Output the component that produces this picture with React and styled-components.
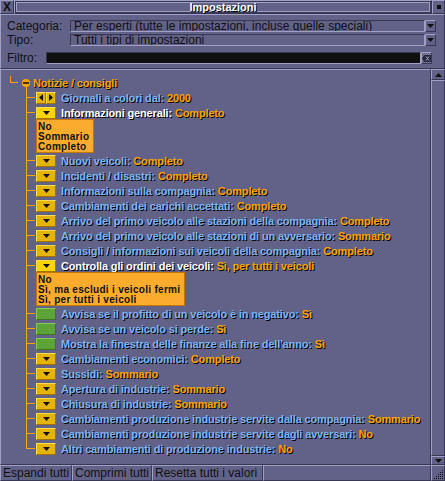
import React from "react";
import styled, { createGlobalStyle, css } from "styled-components";

const BG = "#626288";
const LIGHT = "#a0a0c4";
const DARK = "#383854";
const ORANGE = "#fca400";
const BLUE = "#7cb4f4";
const INK = "#101010";

const GlobalStyle = createGlobalStyle`
  html, body { margin: 0; padding: 0; background: ${BG}; }
  body { font-family: "Liberation Sans", Arial, sans-serif; }
`;

const raised = css`
  border-style: solid;
  border-width: 1px;
  border-color: ${LIGHT} ${DARK} ${DARK} ${LIGHT};
`;
const sunken = css`
  border-style: solid;
  border-width: 1px;
  border-color: ${DARK} ${LIGHT} ${LIGHT} ${DARK};
`;

const Window = styled.div`
  width: 445px;
  height: 481px;
  display: flex;
  flex-direction: column;
  background: ${BG};
  box-sizing: border-box;
  overflow: hidden;
`;

/* ---------- title bar ---------- */
const TitleBar = styled.div`
  display: flex;
  height: 14px;
  flex-shrink: 0;
`;
const CloseBtn = styled.div`
  ${raised};
  width: 12px;
  display: flex;
  align-items: center;
  justify-content: center;
  font: bold 12px "Liberation Sans", sans-serif;
  color: ${INK};
`;
const Caption = styled.div`
  ${raised};
  flex: 1;
  display: flex;
  align-items: center;
  justify-content: center;
  box-shadow: inset 0 0 0 1px ${DARK}, inset 0 0 0 2px ${LIGHT};
  color: #fff;
  font: bold 11px "Liberation Sans", sans-serif;
  text-shadow: 1px 1px 0 #000;
`;
const StickyBtn = styled.div`
  ${raised};
  width: 11px;
  display: flex;
  align-items: center;
  justify-content: center;
  &::after {
    content: "";
    width: 4px;
    height: 4px;
    background: ${INK};
  }
`;

/* ---------- header panel ---------- */
const Header = styled.div`
  ${raised};
  height: 48px;
  flex-shrink: 0;
  padding: 5px 8px 0 6px;
  box-sizing: content-box;
  display: flex;
  flex-direction: column;
  gap: 2px;
`;
const FieldRow = styled.div`
  display: flex;
  align-items: center;
  height: 12px;
  margin-top: ${(p) => p.$gapTop || 0}px;
  padding-right: ${(p) => p.$padRight || 0}px;
`;
const Label = styled.div`
  width: ${(p) => p.$w}px;
  flex-shrink: 0;
  font-size: 12px;
  color: ${INK};
  line-height: 12px;
`;
const DropField = styled.div`
  ${sunken};
  flex: 1;
  height: 10px;
  padding-left: 3px;
  font-size: 12px;
  line-height: 10px;
  color: ${INK};
  white-space: nowrap;
  overflow: hidden;
`;
const DropArrowBtn = styled.div`
  ${raised};
  width: 9px;
  height: 10px;
  display: flex;
  align-items: center;
  justify-content: center;
`;
const FilterField = styled.div`
  ${sunken};
  flex: 1;
  height: 10px;
  background: ${INK};
`;
const ClearBtn = styled.div`
  ${raised};
  width: 9px;
  height: 10px;
  display: flex;
  align-items: center;
  justify-content: center;
  background: repeating-conic-gradient(#8888a8 0 25%, #58587a 0 50%) 0 0 / 2px 2px;
`;

/* ---------- list ---------- */
const Body = styled.div`
  flex: 1;
  display: flex;
  min-height: 0;
`;
const List = styled.div`
  ${raised};
  flex: 1;
  padding-top: 5px;
  overflow: hidden;
`;
const Scroll = styled.div`
  width: 14px;
  display: flex;
  flex-direction: column;
`;
const ScrollBtn = styled.div`
  ${raised};
  height: ${(p) => p.$h}px;
  display: flex;
  align-items: center;
  justify-content: center;
`;
const ScrollTrack = styled.div`
  ${raised};
  flex: 1;
`;

const Row = styled.div`
  display: flex;
  align-items: center;
  height: 15px;
  white-space: nowrap;
`;
const Gutter = styled.div`
  width: 35px;
  height: 100%;
  flex-shrink: 0;
  background:
    linear-gradient(${ORANGE}, ${ORANGE}) 25px 7px / 9px 1px no-repeat,
    linear-gradient(${ORANGE}, ${ORANGE}) 25px 0 / 1px ${(p) => (p.$last ? "8px" : "100%")} no-repeat;
`;
const RootGutter = styled.div`
  width: 21px;
  height: 100%;
  flex-shrink: 0;
  background:
    linear-gradient(${ORANGE}, ${ORANGE}) 9px 7px / 8px 1px no-repeat,
    linear-gradient(${ORANGE}, ${ORANGE}) 9px 1px / 1px 7px no-repeat;
`;
const Fold = styled.div`
  width: 8px;
  height: 8px;
  border-radius: 50%;
  background: ${ORANGE};
  margin: 1px 3px 0 0;
  display: flex;
  align-items: center;
  justify-content: center;
  &::after {
    content: "";
    width: 6px;
    height: 2px;
    background: #4a2c00;
  }
`;
const RootRow = styled(Row)`
  background: linear-gradient(${ORANGE}, ${ORANGE}) 25px 12px / 1px 3px no-repeat;
`;
const Heading = styled.span`
  font: bold 11px "Liberation Sans", sans-serif;
  letter-spacing: -0.15px;
  color: ${ORANGE};
  text-shadow: 1px 1px 0 #000;
`;

const YellowBtn = styled.div`
  width: ${(p) => p.$w}px;
  height: 12px;
  box-sizing: border-box;
  border: 1px solid;
  border-color: #fcdc50 #a07000 #a07000 #fcdc50;
  background: ${(p) => (p.$active ? "#fcd400" : "#e4b400")};
  display: flex;
  align-items: center;
  justify-content: center;
`;
const Control = styled.div`
  display: flex;
  width: 20px;
  margin-right: 5px;
`;
const BoolBox = styled.div`
  width: 20px;
  height: 12px;
  margin-right: 5px;
  box-sizing: border-box;
  border: 1px solid;
  border-color: #88c860 #3c7424 #3c7424 #88c860;
  background: #5ca438;
`;
const Text = styled.span`
  font: bold 11px "Liberation Sans", sans-serif;
  letter-spacing: -0.15px;
  color: ${(p) => (p.$open ? "#ffffff" : BLUE)};
  text-shadow: 1px 1px 0 #000;
`;
const Value = styled.span`
  color: ${ORANGE};
`;

const PopRow = styled.div`
  display: flex;
  height: 34px;
  margin-top: -1px;
`;
const PopGutter = styled.div`
  width: 35px;
  flex-shrink: 0;
  background: linear-gradient(${ORANGE}, ${ORANGE}) 25px 0 / 1px 100% no-repeat;
`;
const Popup = styled.div`
  background: #fcac2c;
  border: 1px solid #c07800;
  padding: 2px 4px 0 1px;
  box-sizing: border-box;
  height: 34px;
`;
const PopItem = styled.div`
  font: bold 10px "Liberation Sans", sans-serif;
  letter-spacing: 0.3px;
  line-height: 10px;
  height: 10px;
  color: ${INK};
`;

/* ---------- bottom bar ---------- */
const Bottom = styled.div`
  display: flex;
  height: 16px;
  flex-shrink: 0;
`;
const BarBtn = styled.div`
  ${raised};
  width: ${(p) => (p.$w ? `${p.$w - 4}px` : "auto")};
  flex: ${(p) => (p.$w ? "none" : 1)};
  padding-left: 2px;
  box-sizing: content-box;
  font-size: 12px;
  line-height: 14px;
  color: ${INK};
  white-space: nowrap;
`;
const Resize = styled.div`
  ${raised};
  width: 12px;
  display: flex;
  align-items: flex-end;
  justify-content: flex-end;
`;

const Tri = ({ dir = "down", color = INK }) => {
  const pts = {
    down: "0,0 7,0 3.5,4",
    up: "0,4 7,4 3.5,0",
    left: "4,0 4,7 0,3.5",
    right: "0,0 0,7 4,3.5",
  }[dir];
  const vert = dir === "down" || dir === "up";
  return (
    <svg width={vert ? 7 : 4} height={vert ? 4 : 7} viewBox={vert ? "0 0 7 4" : "0 0 4 7"}>
      <polygon points={pts} fill={color} />
    </svg>
  );
};

const rows = [
  { type: "arrows", label: "Giornali a colori dal", value: "2000" },
  { type: "drop", label: "Informazioni generali", value: "Completo", open: ["No", "Sommario", "Completo"] },
  { type: "drop", label: "Nuovi veicoli", value: "Completo" },
  { type: "drop", label: "Incidenti / disastri", value: "Completo" },
  { type: "drop", label: "Informazioni sulla compagnia", value: "Completo" },
  { type: "drop", label: "Cambiamenti dei carichi accettati", value: "Completo" },
  { type: "drop", label: "Arrivo del primo veicolo alle stazioni della compagnia", value: "Completo" },
  { type: "drop", label: "Arrivo del primo veicolo alle stazioni di un avversario", value: "Sommario" },
  { type: "drop", label: "Consigli / informazioni sui veicoli della compagnia", value: "Completo" },
  {
    type: "drop",
    label: "Controlla gli ordini dei veicoli",
    value: "Sì, per tutti i veicoli",
    open: ["No", "Sì, ma escludi i veicoli fermi", "Sì, per tutti i veicoli"],
  },
  { type: "bool", label: "Avvisa se il profitto di un veicolo è in negativo", value: "Sì" },
  { type: "bool", label: "Avvisa se un veicolo si perde", value: "Sì" },
  { type: "bool", label: "Mostra la finestra delle finanze alla fine dell'anno", value: "Sì" },
  { type: "drop", label: "Cambiamenti economici", value: "Completo" },
  { type: "drop", label: "Sussidi", value: "Sommario" },
  { type: "drop", label: "Apertura di industrie", value: "Sommario" },
  { type: "drop", label: "Chiusura di industrie", value: "Sommario" },
  { type: "drop", label: "Cambiamenti produzione industrie servite dalla compagnia", value: "Sommario" },
  { type: "drop", label: "Cambiamenti produzione industrie servite dagli avversari", value: "No" },
  { type: "drop", label: "Altri cambiamenti di produzione industrie", value: "No" },
];

const SettingControl = ({ item }) => {
  if (item.type === "bool") return <BoolBox />;
  if (item.type === "arrows")
    return (
      <Control>
        <YellowBtn $w={10}>
          <Tri dir="left" />
        </YellowBtn>
        <YellowBtn $w={10}>
          <Tri dir="right" />
        </YellowBtn>
      </Control>
    );
  return (
    <Control>
      <YellowBtn $w={20} $active={!!item.open}>
        <Tri dir="down" />
      </YellowBtn>
    </Control>
  );
};

const App = () => {
  return (
    <>
      <GlobalStyle />
      <Window>
        <TitleBar>
          <CloseBtn>X</CloseBtn>
          <Caption>Impostazioni</Caption>
          <StickyBtn />
        </TitleBar>

        <Header>
          <FieldRow>
            <Label $w={63}>Categoria:</Label>
            <DropField>Per esperti (tutte le impostazioni, incluse quelle speciali)</DropField>
            <DropArrowBtn>
              <Tri dir="down" />
            </DropArrowBtn>
          </FieldRow>
          <FieldRow>
            <Label $w={63}>Tipo:</Label>
            <DropField>Tutti i tipi di impostazioni</DropField>
            <DropArrowBtn>
              <Tri dir="down" />
            </DropArrowBtn>
          </FieldRow>
          <FieldRow $gapTop={4} $padRight={4}>
            <Label $w={39}>Filtro:</Label>
            <FilterField />
            <ClearBtn>
              <svg width="9" height="7" viewBox="0 0 9 7">
                <polygon points="2,0 9,0 9,7 2,7 0,3.5" fill="#282840" />
                <path d="M4 1.5 L7 5.5 M7 1.5 L4 5.5" stroke="#a8a8c8" strokeWidth="1" />
              </svg>
            </ClearBtn>
          </FieldRow>
        </Header>

        <Body>
          <List>
            <RootRow>
              <RootGutter />
              <Fold />
              <Heading>Notizie / consigli</Heading>
            </RootRow>
            {rows.map((item, i) => (
              <React.Fragment key={item.label}>
                <Row>
                  <Gutter $last={i === rows.length - 1} />
                  <SettingControl item={item} />
                  <Text $open={!!item.open}>
                    {item.label}: <Value>{item.value}</Value>
                  </Text>
                </Row>
                {item.open && (
                  <PopRow>
                    <PopGutter />
                    <Popup>
                      {item.open.map((o) => (
                        <PopItem key={o}>{o}</PopItem>
                      ))}
                    </Popup>
                  </PopRow>
                )}
              </React.Fragment>
            ))}
          </List>
          <Scroll>
            <ScrollBtn $h={9}>
              <Tri dir="up" />
            </ScrollBtn>
            <ScrollTrack />
            <ScrollBtn $h={7}>
              <Tri dir="down" />
            </ScrollBtn>
          </Scroll>
        </Body>

        <Bottom>
          <BarBtn $w={72}>Espandi tutti</BarBtn>
          <BarBtn $w={80}>Comprimi tutti</BarBtn>
          <BarBtn $w={111}>Resetta tutti i valori</BarBtn>
          <BarBtn />
          <Resize>
            <svg width="10" height="10" viewBox="0 0 10 10">
              {[...Array(5)].map((_, r) =>
                [...Array(r + 1)].map((__, c) => (
                  <rect key={`${r}-${c}`} x={8 - c * 2} y={r * 2} width="1" height="1" fill={INK} />
                ))
              )}
            </svg>
          </Resize>
        </Bottom>
      </Window>
    </>
  );
};

export default App;
